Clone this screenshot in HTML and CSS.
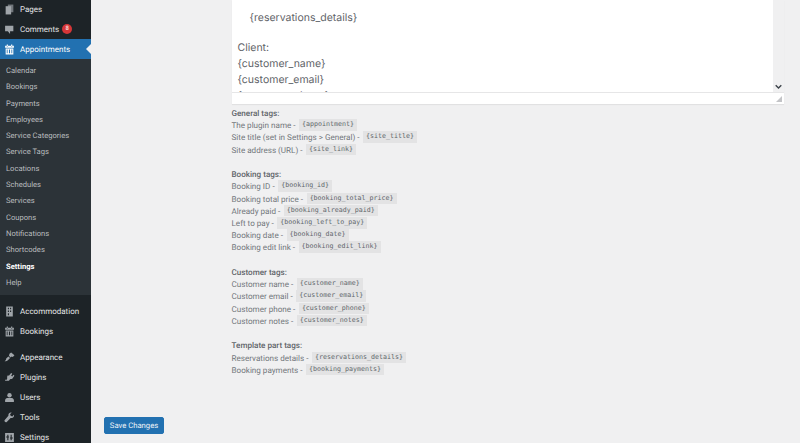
FILE: index.html
```html
<!DOCTYPE html>
<html lang="en">
<head>
    <meta charset="UTF-8">
    <meta name="viewport" content="width=device-width, initial-scale=1.0">
    <title>Settings</title>
    <link rel="stylesheet" href="styles.css">
</head>
<body>
    <div class="admin-wrap">
        <!-- Sidebar -->
        <nav class="sidebar">
            <ul class="menu">
                <li class="menu-item">
                    <svg class="menu-icon" viewBox="0 0 20 20"><path d="M7 1h10v14H7z" opacity=".65"/><path d="M3 4h10v15H3z"/></svg>
                    Pages
                </li>
                <li class="menu-item">
                    <svg class="menu-icon" viewBox="0 0 20 20"><path d="M2 3h15v10h-6v5l-4-5H2z"/></svg>
                    Comments <span class="badge">8</span>
                </li>
                <li class="menu-item menu-item-active">
                    <svg class="menu-icon" viewBox="0 0 20 20"><path d="M5 1h2v3H5zM13 1h2v3h-2zM2 3h3v2h2V3h6v2h2V3h3v4H2zM3 8h14v11H3zM5 10v7h1.500v-7zM9 10v7h2v-7zM13.500 10v7H15v-7z" fill-rule="evenodd"/></svg>
                    Appointments
                </li>
            </ul>
            <ul class="submenu">
                <li>Calendar</li>
                <li>Bookings</li>
                <li>Payments</li>
                <li>Employees</li>
                <li>Service Categories</li>
                <li>Service Tags</li>
                <li>Locations</li>
                <li>Schedules</li>
                <li>Services</li>
                <li>Coupons</li>
                <li>Notifications</li>
                <li>Shortcodes</li>
                <li class="submenu-current">Settings</li>
                <li>Help</li>
            </ul>
            <ul class="menu menu-group">
                <li class="menu-item">
                    <svg class="menu-icon" viewBox="0 0 20 20"><path d="M4 1h12v18H4zM7 3v3h2V3zM11 3v3h2V3zM7 8v3h2V8zM11 8v3h2V8zM7 13v4h2v-4z" fill-rule="evenodd"/></svg>
                    Accommodation
                </li>
                <li class="menu-item">
                    <svg class="menu-icon" viewBox="0 0 20 20"><path d="M5 1h2v3H5zM13 1h2v3h-2zM2 3h3v2h2V3h6v2h2V3h3v4H2zM3 8h14v11H3zM5 10v7h1.500v-7zM9 10v7h2v-7zM13.500 10v7H15v-7z" fill-rule="evenodd"/></svg>
                    Bookings
                </li>
            </ul>
            <ul class="menu menu-group">
                <li class="menu-item">
                    <svg class="menu-icon" viewBox="0 0 20 20"><path d="M10 3l3-2 6 5-3 3-2-1-2 2-3-3zM8 8l3 3-3 3c-2 2-4 3-7 3 2-1 3-3 3-5z"/></svg>
                    Appearance
                </li>
                <li class="menu-item">
                    <svg class="menu-icon" viewBox="0 0 20 20"><path d="M13 2l2 1-2 4 2 1 2-3 2 2-3 4c-1 2-3 2-5 2l-2 3H2v-2h3l1-3c-1-2 0-3 1-5l2 1 2-3z"/></svg>
                    Plugins
                </li>
                <li class="menu-item">
                    <svg class="menu-icon" viewBox="0 0 20 20"><circle cx="10" cy="6" r="4"/><path d="M2 18v-3c0-3 3-4 5-4h6c2 0 5 1 5 4v3z"/></svg>
                    Users
                </li>
                <li class="menu-item">
                    <svg class="menu-icon" viewBox="0 0 20 20"><path d="M18 5l-3 3-3-1-1-3 3-3c-3-1-6 1-6 4v2L1 15c-1 2 2 5 4 3l7-7h2c3 0 5-3 4-6z"/></svg>
                    Tools
                </li>
                <li class="menu-item">
                    <svg class="menu-icon" viewBox="0 0 20 20"><path d="M2 2h16v16H2zM6 5v3H4v2h2v5h2v-5h1V8H8V5zM12 5v5h-1v2h1v3h2v-3h2v-2h-2V5z" fill-rule="evenodd"/></svg>
                    Settings
                </li>
            </ul>
        </nav>

        <!-- Main content -->
        <main class="content">
            <div class="settings-row">
                <div class="editor">
                    <div class="editor-body">
                        <div class="editor-text">
                            <p class="editor-line editor-indent">{reservations_details}</p>
                            <p class="editor-line editor-gap">Client:</p>
                            <p class="editor-line">{customer_name}</p>
                            <p class="editor-line">{customer_email}</p>
                            <p class="editor-line">{customer_phone}</p>
                        </div>
                        <div class="scrollbar">
                            <svg class="scroll-arrow" viewBox="0 0 10 8"><path d="M1 1.500l4 4 4-4" fill="none" stroke="#3c434a" stroke-width="2"/></svg>
                        </div>
                    </div>
                    <div class="editor-status">
                        <svg class="resize-handle" viewBox="0 0 6 6"><path d="M6 0v6H0z" fill="#c3c4c7"/></svg>
                    </div>
                </div>

                <div class="tag-group">
                    <h4>General tags:</h4>
                    <p>The plugin name - <code>{appointment}</code></p>
                    <p>Site title (set in Settings &gt; General) - <code>{site_title}</code></p>
                    <p>Site address (URL) - <code>{site_link}</code></p>
                </div>
                <div class="tag-group">
                    <h4>Booking tags:</h4>
                    <p>Booking ID - <code>{booking_id}</code></p>
                    <p>Booking total price - <code>{booking_total_price}</code></p>
                    <p>Already paid - <code>{booking_already_paid}</code></p>
                    <p>Left to pay - <code>{booking_left_to_pay}</code></p>
                    <p>Booking date - <code>{booking_date}</code></p>
                    <p>Booking edit link - <code>{booking_edit_link}</code></p>
                </div>
                <div class="tag-group">
                    <h4>Customer tags:</h4>
                    <p>Customer name - <code>{customer_name}</code></p>
                    <p>Customer email - <code>{customer_email}</code></p>
                    <p>Customer phone - <code>{customer_phone}</code></p>
                    <p>Customer notes - <code>{customer_notes}</code></p>
                </div>
                <div class="tag-group">
                    <h4>Template part tags:</h4>
                    <p>Reservations details - <code>{reservations_details}</code></p>
                    <p>Booking payments - <code>{booking_payments}</code></p>
                </div>
            </div>
            <button class="save-button" type="button">Save Changes</button>
        </main>
    </div>
</body>
</html>
```

FILE: styles.css
```css
html,
body {
    margin: 0;
    padding: 0;
    height: 100%;
    overflow: hidden;
}

body {
    font-family: Roboto, "Open Sans", Arial, sans-serif;
    text-rendering: geometricPrecision;
    background-color: #f0f0f1;
    color: #3c434a;
}

ul {
    list-style: none;
    margin: 0;
    padding: 0;
}

.admin-wrap {
    display: flex;
    height: 443px;
    overflow: hidden;
}

/* Styles for the sidebar */
.sidebar {
    width: 91px;
    flex-shrink: 0;
    background-color: #1d2327;
    color: #e4e5e6;
    margin-top: -1px;
    overflow: hidden;
}

.menu-item {
    display: flex;
    align-items: center;
    height: 20px;
    padding-left: 4px;
    font-size: 8px;
    position: relative;
}

.menu-icon {
    width: 11px;
    height: 11px;
    margin-right: 5px;
    fill: #a0a5aa;
    flex-shrink: 0;
}

.badge {
    width: 10px;
    height: 10px;
    margin-left: 3px;
    border-radius: 50%;
    background-color: #d63638;
    color: #fff;
    font-size: 6px;
    line-height: 10px;
    text-align: center;
}

.menu-item-active {
    background-color: #2271b1;
    color: #fff;
}

.menu-item-active .menu-icon {
    fill: #fff;
}

/* The little notch pointing at the page */
.menu-item-active::after {
    content: "";
    position: absolute;
    right: 0;
    top: 5px;
    border: 5px solid transparent;
    border-right-color: #f0f0f1;
    border-left-width: 0;
}

.submenu {
    background-color: #2c3338;
    padding: 4px 0 4px;
}

.submenu li {
    height: 16.3px;
    line-height: 16.3px;
    padding-left: 6px;
    font-size: 7.6px;
    color: #b9bcbf;
    white-space: nowrap;
}

.submenu .submenu-current {
    color: #fff;
    font-weight: 700;
}

.menu-group {
    padding-top: 6px;
}

/* Styles for the main column */
.content {
    flex: 1;
    padding-left: 13px;
    min-width: 0;
}

.settings-row {
    margin-left: 127.5px;
    width: 552px;
    height: 417px;
}

/* Styles for the editor */
.editor {
    background-color: #fff;
    height: 104px;
    box-shadow: 0 1px 1px rgba(0, 0, 0, 0.06);
    margin-bottom: 3px;
}

.editor-body {
    display: flex;
    height: 93px;
    border-bottom: 1px solid #e6e6e7;
    box-sizing: border-box;
}

.editor-text {
    flex: 1;
    overflow: hidden;
    padding: 10px 6px 0;
    font-family: Inter, "Open Sans", sans-serif;
    font-size: 10.5px;
    color: #5f6469;
}

.editor-line {
    margin: 0;
    line-height: 16px;
}

.editor-indent {
    padding-left: 12px;
}

.editor-gap {
    margin-top: 14px;
}

.scrollbar {
    width: 11px;
    background-color: #f0f0f1;
    display: flex;
    align-items: flex-end;
    justify-content: center;
    padding-bottom: 2px;
}

.scroll-arrow {
    width: 7px;
    height: 6px;
}

.editor-status {
    display: flex;
    justify-content: flex-end;
    align-items: flex-end;
    height: 11px;
    padding: 0 2px 2px 0;
    box-sizing: border-box;
}

.resize-handle {
    width: 6px;
    height: 6px;
}

/* Styles for the tag lists */
.tag-group {
    font-size: 8.1px;
    line-height: 12.2px;
    color: #72777c;
    margin-bottom: 12.4px;
    white-space: nowrap;
}

.tag-group h4 {
    margin: 0;
    font-size: 8.1px;
    font-weight: 500;
    color: #5f6469;
}

.tag-group p {
    margin: 0;
}

.tag-group code {
    display: inline-block;
    margin-left: 1.500px;
    padding: 0 3px;
    height: 11.5px;
    line-height: 11.5px;
    vertical-align: top;
    background-color: #e3e3e4;
    font-family: "DejaVu Sans Mono", "Liberation Mono", monospace;
    font-size: 6.65px;
    color: #62676c;
}

/* Styles for the save button */
.save-button {
    display: block;
    width: 60px;
    height: 17px;
    padding: 0;
    border: 1px solid #2271b1;
    border-radius: 2px;
    background-color: #2271b1;
    color: #f0f4f8;
    font-family: inherit;
    font-size: 7.7px;
    text-rendering: geometricPrecision;
    cursor: pointer;
}

.save-button:hover {
    background-color: #135e96;
}
```
